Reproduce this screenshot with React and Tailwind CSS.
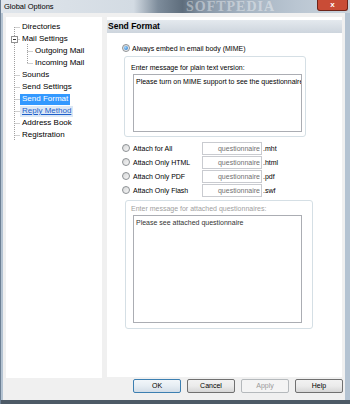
import React from "react";

const treeItems = [
  { label: "Directories", level: 0 },
  { label: "Mail Settings", level: 0 },
  { label: "Outgoing Mail", level: 1 },
  { label: "Incoming Mail", level: 1 },
  { label: "Sounds", level: 0 },
  { label: "Send Settings", level: 0 },
  { label: "Send Format", level: 0, selected: true },
  { label: "Reply Method", level: 0, hot: true },
  { label: "Address Book", level: 0 },
  { label: "Registration", level: 0 },
];

const attachRows = [
  { label: "Attach for All", ext: ".mht" },
  { label: "Attach Only HTML", ext: ".html" },
  { label: "Attach Only PDF", ext: ".pdf" },
  { label: "Attach Only Flash", ext: ".swf" },
];

const Radio = ({ checked }) => (
  <span className="w-[8px] h-[8px] rounded-full border border-[#8d9194] bg-[linear-gradient(135deg,#d6d7d8,#f7f7f7)] flex items-center justify-center shrink-0">
    {checked && (
      <span className="w-[4px] h-[4px] rounded-full bg-[radial-gradient(circle_at_35%_35%,#9fd6ff,#1c6fc4)]" />
    )}
  </span>
);

const TreeLines = () => {
  const rootRows = [0, 1, 4, 5, 6, 7, 8, 9];
  return (
    <svg className="absolute inset-0" width="96" height="140" viewBox="0 0 96 140">
      <g stroke="#a0a0a0" strokeWidth="1" strokeDasharray="1 1" fill="none">
        <line x1="8.5" y1="10" x2="8.5" y2="123" />
        {rootRows.map((i) => (
          <line key={i} x1={i === 1 ? 11.5 : 8.5} y1={10.5 + 12 * i} x2="14" y2={10.5 + 12 * i} />
        ))}
        <line x1="21.5" y1="27" x2="21.5" y2="46.5" />
        <line x1="21.5" y1="34.5" x2="27" y2="34.5" />
        <line x1="21.5" y1="46.5" x2="27" y2="46.5" />
      </g>
      <rect x="5.5" y="19.5" width="6" height="6" fill="#fff" stroke="#919191" />
      <line x1="7" y1="22.5" x2="10" y2="22.5" stroke="#333" />
    </svg>
  );
};

const Button = ({ children, primary, disabled }) => (
  <div
    className={
      "w-[48px] h-[14px] rounded-[2px] border flex items-center justify-center text-[7px] " +
      (disabled
        ? "border-[#b5b9bc] bg-[#f4f4f4] text-[#9a9a9a]"
        : primary
        ? "border-[#3c7fb1] bg-[linear-gradient(to_bottom,#f2f6fa,#e6edf3_50%,#d3dde7)] text-black"
        : "border-[#707070] bg-[linear-gradient(to_bottom,#f2f2f2,#ebebeb_50%,#d6d6d6)] text-black")
    }
  >
    {children}
  </div>
);

export default function App() {
  return (
    <div
      className="w-[350px] h-[404px] overflow-hidden flex flex-col bg-[#b4c3d2] border-l border-[#6d8094]"
      style={{ fontFamily: '"Liberation Sans", Arial, sans-serif' }}
    >
      {/* title bar */}
      <div className="h-[13px] shrink-0 flex items-start bg-[linear-gradient(to_right,#dfe5eb_0%,#d3dbe3_38%,#7d8c9b_45%,#5e6d7c_52%,#8796a6_58%,#a6b4c2_70%,#bac6d2_85%,#c9d3dc_100%)]">
        <span className="w-[185px] shrink-0 pl-[3px] pt-[3px] text-[7.5px] text-black leading-none">Global Options</span>
        <span
          className="flex-1 text-[14px] font-bold tracking-[1px] text-white/40 leading-[13px] whitespace-nowrap overflow-hidden"
          style={{ fontFamily: '"Liberation Serif", serif' }}
        >
          SOFTPEDIA
        </span>
        <div className="w-[31px] h-[11px] shrink-0 mr-[2px] rounded-b-[3px] border border-t-0 border-[#6e2419] bg-[#c94c36] flex items-center justify-center text-white text-[8px] font-bold leading-none">
          x
        </div>
      </div>

      {/* client area */}
      <div className="ml-[2px] mr-[5px] h-[387px] bg-[#f0f0f0] flex flex-col">
        <div className="flex gap-[5px] pt-[4px] pl-[3px] pr-[3px] h-[364px]">
          {/* tree */}
          <div className="relative w-[96px] h-[361px] bg-white pt-[4px]">
            <TreeLines />
            {treeItems.map((it) => (
              <div
                key={it.label}
                className={"relative h-[12px] flex items-center " + (it.level ? "pl-[27px]" : "pl-[14px]")}
              >
                <span
                  className={
                    "px-[2px] h-[11px] flex items-center text-[8px] leading-none whitespace-nowrap " +
                    (it.selected
                      ? "bg-[#3399ff] text-white"
                      : it.hot
                      ? "bg-[#dbe8f6] text-[#1f5fc9] underline"
                      : "text-black")
                  }
                >
                  {it.label}
                </span>
              </div>
            ))}
          </div>

          {/* right panel */}
          <div className="flex-1 h-[360px] bg-white flex flex-col">
            <div className="mt-[3px] h-[13px] bg-[linear-gradient(to_bottom,#e4e9ee,#cdd5dd)] flex items-center pl-[1px]">
              <span className="text-[8.5px] font-bold text-black leading-none">Send Format</span>
            </div>

            <div className="mt-[10px] h-[10px] pl-[15px] flex items-center gap-[2px]">
              <Radio checked />
              <span className="text-[7px] leading-none text-black">Always embed in email body (MIME)</span>
            </div>

            <div className="ml-[17px] mt-[3px] w-[182px] h-[81px] rounded-[3px] border border-[#d5dfe5] flex flex-col">
              <div className="pl-[6px] pt-[6px] h-[17px] flex items-start">
                <span className="text-[7px] leading-[9px] text-black">Enter message for plain text version:</span>
              </div>
              <div className="ml-[8px] w-[169px] h-[58px] border border-[#abadb3] bg-white overflow-hidden px-[2px] pt-[2px]">
                <div className="text-[7px] leading-[9px] whitespace-nowrap text-black">
                  Please turn on MIME support to see the questionnaire
                </div>
              </div>
            </div>

            <div className="mt-[4px] flex flex-col">
              {attachRows.map((r) => (
                <div key={r.label} className="h-[14px] pl-[15px] flex items-center">
                  <Radio />
                  <span className="ml-[3px] w-[69px] text-[7px] leading-none text-black">{r.label}</span>
                  <div className="w-[60px] h-[13px] border border-[#c9cbd0] bg-white flex items-center justify-end pr-[1px]">
                    <span className="text-[7px] leading-none text-[#707070]">questionnaire</span>
                  </div>
                  <span className="ml-[1px] text-[7px] leading-none text-black">{r.ext}</span>
                </div>
              ))}
            </div>

            <div className="ml-[18px] mt-[3px] w-[188px] h-[129px] rounded-[3px] border border-[#d5dfe5] flex flex-col">
              <div className="pl-[5px] pt-[3px] h-[14px] flex items-start">
                <span className="text-[7px] leading-[9px] text-[#a0a0a0]">
                  Enter message for attached questionnaires:
                </span>
              </div>
              <div className="ml-[7px] w-[169px] h-[108px] border border-[#abadb3] bg-white overflow-hidden px-[2px] pt-[2px]">
                <div className="text-[7px] leading-[9px] whitespace-nowrap text-[#333]">
                  Please see attached questionnaire
                </div>
              </div>
            </div>
          </div>
        </div>

        {/* buttons */}
        <div className="flex justify-end gap-[6px] pr-[2px] pt-[2px]">
          <Button primary>OK</Button>
          <Button>Cancel</Button>
          <Button disabled>Apply</Button>
          <Button>Help</Button>
        </div>
      </div>
      <div className="flex-1 bg-[#4d5a66]" />
    </div>
  );
}
